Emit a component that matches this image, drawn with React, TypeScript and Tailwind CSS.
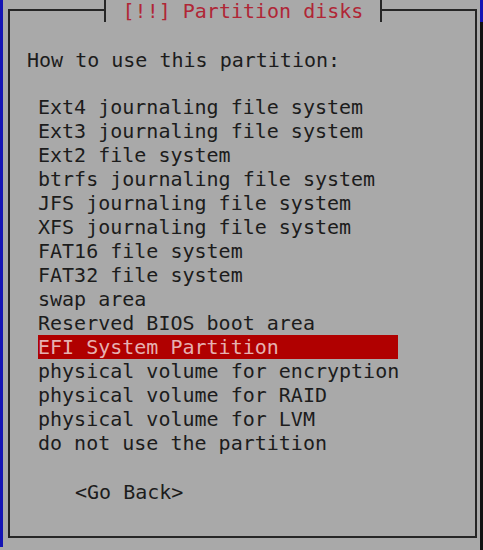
const items = [
  'Ext4 journaling file system',
  'Ext3 journaling file system',
  'Ext2 file system',
  'btrfs journaling file system',
  'JFS journaling file system',
  'XFS journaling file system',
  'FAT16 file system',
  'FAT32 file system',
  'swap area',
  'Reserved BIOS boot area',
  'EFI System Partition',
  'physical volume for encryption',
  'physical volume for RAID',
  'physical volume for LVM',
  'do not use the partition',
];

const selected = 'EFI System Partition';

export default function App() {
  return (
    <div
      className="flex w-[483px] h-[550px] bg-[#a9a9a9] text-[20px] leading-[24px] text-[#1c1c1c] overflow-hidden"
      style={{ fontFamily: '"DejaVu Sans Mono", "Liberation Mono", monospace' }}
    >
      <div className="w-[3px] h-[547px] bg-[#1414b4]" />

      <div className="flex-1 pt-[9px] pl-[5px] pr-[3px]">
        <div className="relative h-[529px] border-2 border-[#262626]">
          {/* title sits over the top border */}
          <div className="absolute left-[94px] top-[-11px] h-[22px] w-[278px] border-x-2 border-[#262626] bg-[#a9a9a9] flex items-center justify-center text-[#b02636]">
            [!!] Partition disks
          </div>

          <div className="pt-[37px] pl-[17px]">
            <div>How to use this partition:</div>

            <div className="mt-[23px] ml-[11px]">
              {items.map((item) => (
                <div
                  key={item}
                  className={
                    item === selected
                      ? 'w-[360px] h-[24px] bg-[#b00000] text-[#e6b0b0] whitespace-pre'
                      : 'w-[360px] h-[24px] whitespace-pre'
                  }
                >
                  {item}
                </div>
              ))}
            </div>

            <div className="mt-[25px] ml-[48px]">&lt;Go Back&gt;</div>
          </div>
        </div>
      </div>

      <div className="w-[3px] flex flex-col">
        <div className="h-[22px] bg-[#1414b4]" />
        <div className="flex-1 bg-[#111111]" />
      </div>
    </div>
  );
}
